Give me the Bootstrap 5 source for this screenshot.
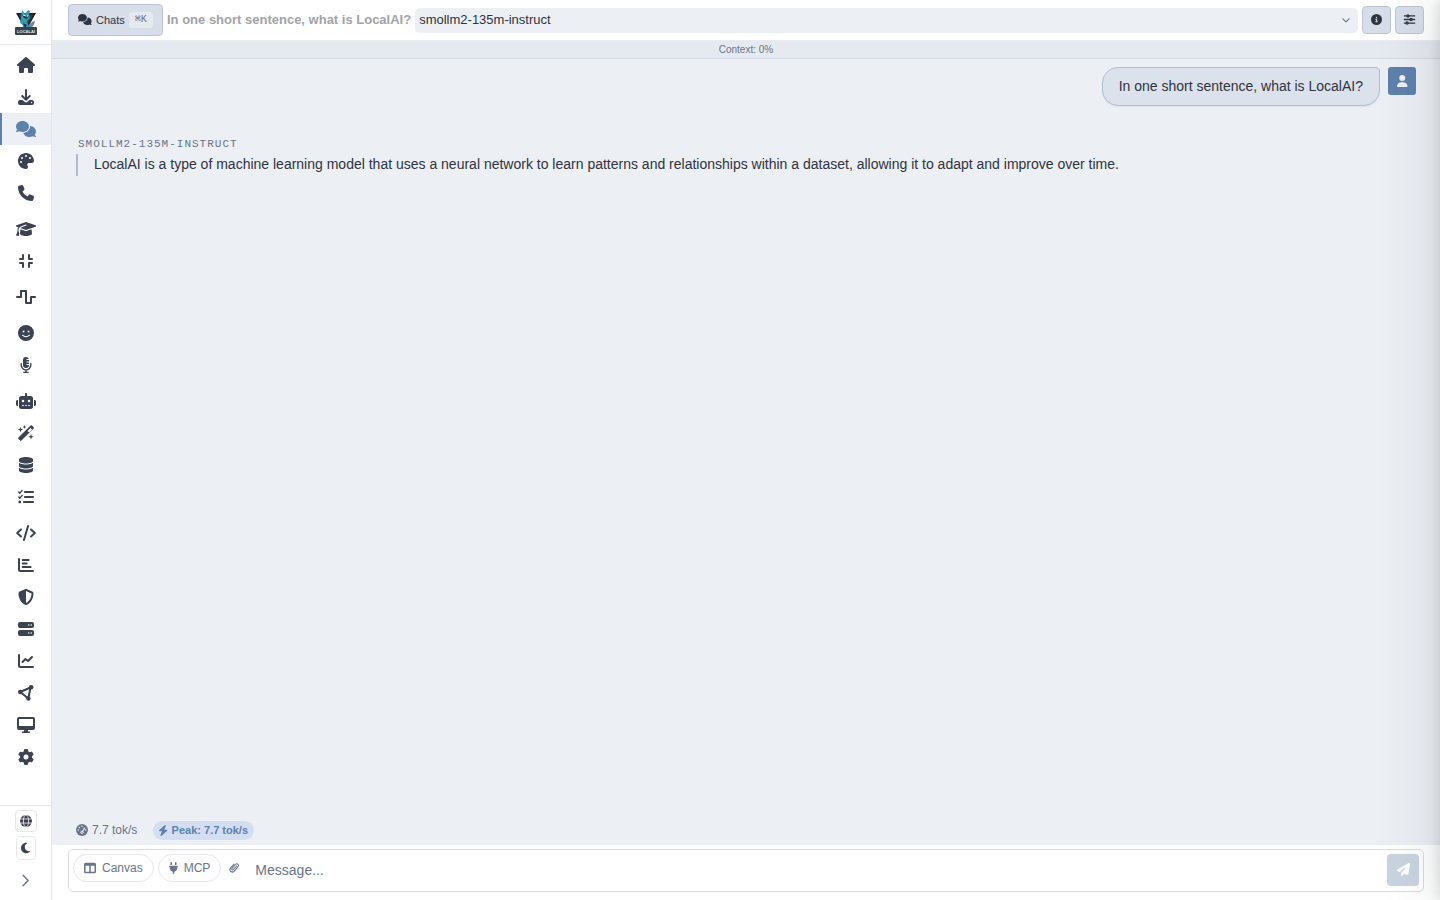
<!DOCTYPE html>
<html lang="en">
<head>
<meta charset="utf-8">
<meta name="viewport" content="width=device-width, initial-scale=1">
<title>LocalAI</title>
<link href="https://cdn.jsdelivr.net/npm/bootstrap@5.3.0/dist/css/bootstrap.min.css" rel="stylesheet">
<style>
:root{--ink:#2e3440;--nav:#3b4252;--muted:#69758a;--accent:#5e81ac;--bg:#eceff4;--line:#e5e7eb;--control:#d8dee9}
body{font-family:"Liberation Sans",Arial,sans-serif;font-size:14px;line-height:22px;color:var(--ink);background:var(--bg)}
.ico{height:1em;width:auto;display:block;flex:none;fill:currentColor;overflow:visible}
.ico .st{fill:none;stroke:currentColor;stroke-width:64;stroke-linecap:round;stroke-linejoin:round}
.side{width:52px;background:#fff;border-right:1px solid #e2e5ec;flex:none}
.brand{height:45px;border-bottom:1px solid var(--line)}
.side-link{height:32px;color:var(--nav);font-size:16px;border-left:2px solid transparent;padding-right:2px}
.side-link.active{background:var(--bg);border-color:var(--accent);color:var(--accent)}
.side-foot{height:95px;border-top:1px solid var(--line);color:var(--nav)}
.mini{border:1px solid var(--line);border-radius:4px;background:#fff;font-size:12px;width:22px;height:22px;padding:0;color:var(--nav)}
.mini.tall{width:20px;height:24px}
.topbar{height:41px;background:#fff;border-bottom:1px solid #e8ebf0}
.ctl{background:var(--control);border:1px solid #bcc5d5;border-radius:4px;color:var(--ink);font-size:11px;line-height:16px;padding:0}
.ctl:hover{background:#ccd4e1}
.chats{height:32px;width:95px}
.chats .ico{margin-bottom:2px}
.square{width:29px;height:28px;padding-bottom:2px}
.keys{font:10px/14px "Liberation Mono","DejaVu Sans Mono",monospace;color:var(--muted);background:#e5e9f0;border:1px solid #e5e9f0;border-radius:3px;padding:0 4px;width:24px;height:16px}
.chat-title{font-size:13px;line-height:20px;font-weight:600;color:#a0a3a9}
.model{height:25px;background-color:var(--bg);border:0;border-radius:5px;font-size:13px;line-height:20px;color:var(--ink);padding:0 24px 0 4px;appearance:none;width:100%}
.chev{right:8px;top:8px;font-size:9px;color:var(--muted);pointer-events:none}
.context{height:18px;background:#e5e9f0;border-bottom:1px solid #d4dae5;font-size:10px;line-height:17px;color:var(--muted)}
.log{padding:8px 24px}
.bubble{background:#dbe2eb;border:1px solid #afc0d6;border-radius:16px 4px 16px 16px;padding:8px 16px;line-height:21px;box-shadow:0 1px 2px #0000000d}
.avatar{width:28px;height:28px;border-radius:3px;background:var(--accent);color:var(--bg);font-size:12px;padding-bottom:1px}
.who{font:11px/14px "Liberation Mono","DejaVu Sans Mono",monospace;letter-spacing:1px;color:var(--muted);margin-top:31px;padding-left:2px}
.reply{border-left:2px solid #b3bac8;padding:0 0 2px 16px;margin-top:3px;line-height:20px}
.stats{padding:0 24px 5px;font-size:12px;line-height:20px;color:var(--muted)}
.peak{background:#d3def3;color:var(--accent);border-radius:10px;font-size:11px;line-height:19px;font-weight:600;padding:0 6px}
.composer{background:#fff;padding:4px 16px 8px}
.box{border:1px solid #d9dbe0;border-radius:5px;padding:4px 4px 5px}
.chip{height:28px;border:1px solid var(--line);border-radius:14px;background:#fff;color:var(--muted);font-size:12px;line-height:18px;padding:0 10px;gap:6px}
.clip{border:0;background:none;color:var(--muted);font-size:12px;width:26px;height:28px;padding:0}
.expand{border:0;background:none;color:var(--muted);font-size:11px;width:26px;height:32px;padding:0}
.entry{border:0;background:transparent;color:var(--ink);height:32px;padding:0 8px;outline:0;min-width:0}
.entry::placeholder{color:var(--muted)}
.send{width:32px;height:32px;border:0;border-radius:4px;background:#cad4e1;color:#fff;font-size:13px;padding:0 0 2px}
.drawer{left:100%;top:0;width:380px;height:100%;box-shadow:0 0 14px #00000026,-8px 0 56px #3b42521f;background:#fff}
</style>
</head>
<body class="vh-100 overflow-hidden">
<svg class="d-none" xmlns="http://www.w3.org/2000/svg">
<symbol id="comments" viewBox="0 0 640 512"><path d="M208 352c114.900 0 208-78.800 208-176S322.900 0 208 0S0 78.800 0 176c0 38.600 14.700 74.300 39.600 103.400c-3.500 9.400-8.700 17.700-14.200 24.700c-4.800 6.200-9.700 11-13.300 14.300c-1.800 1.600-3.300 2.900-4.300 3.700c-.5 .4-.9 .7-1.100 .8l-.2 .2C1 327.200-1.400 334.400 .8 340.900S9.100 352 16 352c21.800 0 43.800-5.600 62.100-12.500c9.200-3.500 17.800-7.400 25.200-11.400C134.100 343.300 169.800 352 208 352zM448 176c0 112.300-99.100 196.900-216.500 207C255.800 457.400 336.400 512 432 512c38.200 0 73.900-8.700 104.700-23.900c7.500 4 16 7.900 25.200 11.400c18.300 6.900 40.300 12.500 62.100 12.500c6.900 0 13.100-4.500 15.200-11.100c2.100-6.600-.2-13.800-5.800-17.900l-.2-.2c-.2-.2-.6-.4-1.100-.8c-1-.8-2.500-2-4.300-3.700c-3.600-3.300-8.500-8.100-13.300-14.300c-5.500-7-10.700-15.400-14.200-24.700c24.900-29 39.600-64.700 39.600-103.400c0-92.800-84.900-168.900-192.600-175.500c.4 5.100 .6 10.300 .6 15.500z"/></symbol>
</svg>
<div class="d-flex h-100">
<aside class="side d-flex flex-column">
  <a href="#" class="brand d-flex align-items-center justify-content-center" aria-label="LocalAI home">
    <svg width="24" height="28" viewBox="0 0 24 28"><path d="M2 5h20L12 23z" fill="#17242d"/><path d="M5 7h14l-7 12z" fill="#294650"/><path d="M7 10 8 2l3 4 3-4 2 1-1 4 1 3-3 3 1 4 5 2-3 4H8l1-6-3-2z" fill="#3a98ac"/><path d="M8 7l7 1-2 3-3-1zM9 15l4 2-2 4z" fill="#17404f"/><path d="M15 16c3 0 2-3 6-3-1 5-3 7-6 6z" fill="#747fb0"/><path d="m9 7 3 1M14 7l-1 2" stroke="#bff2ee"/><rect x="1" y="19" width="22" height="8" rx="1" fill="#36434a"/><text x="12" y="25" text-anchor="middle" font-family="Liberation Sans, sans-serif" font-size="4" font-weight="700" fill="#e3e8e9">LOCALAI</text></svg>
  </a>
  <nav class="d-flex flex-column flex-grow-1 pt-1" aria-label="Main">
    <div class="mb-1">
    <a href="#" class="side-link d-flex align-items-center justify-content-center" aria-label="Home"><svg class="ico" viewBox="0 0 576 512"><path d="M575.800 255.500c0 18-15 32.100-32 32.100h-32l.7 160.200v24.200c0 22.100-17.900 40-40 40H392c-22.100 0-40-17.900-40-40V384c0-17.700-14.300-32-32-32H256c-17.700 0-32 14.300-32 32v88c0 22.100-17.900 40-40 40H104c-22.100 0-40-17.900-40-40V287.600H32c-18 0-32-14-32-32.100c0-9 3-17 10-24L266.400 8c7-7 15-8 22-8s15 2 21 7L564.800 231.500c8 7 12 15 11 24z"/></svg></a>
    <a href="#" class="side-link d-flex align-items-center justify-content-center" aria-label="Install models"><svg class="ico" viewBox="0 0 512 512"><path class="st" d="M256 28v300M136 224l120 118 120-118"/><path d="M64 352h80l67 58q45 36 90 0l67-58h80q64 0 64 64v32q0 64-64 64H64q-64 0-64-64v-32q0-64 64-64zm368 104a24 24 0 1 0 0-48 24 24 0 0 0 0 48z" fill-rule="evenodd"/></svg></a>
    <a href="#" class="side-link active d-flex align-items-center justify-content-center" aria-label="Chat" aria-current="page"><svg class="ico" viewBox="0 0 640 512"><use href="#comments"/></svg></a>
    <a href="#" class="side-link d-flex align-items-center justify-content-center" aria-label="Studio"><svg class="ico" viewBox="0 0 512 512"><path d="M512 256c0 .9 0 1.800 0 2.700c-.4 36.500-33.600 61.300-70.100 61.300H344c-26.500 0-48 21.500-48 48c0 3.400 .4 6.700 1 9.900c2.100 10.200 6.500 20 10.800 29.900c6.100 13.800 12.100 27.500 12.100 42c0 31.800-21.600 60.700-53.400 62c-3.500 .1-7 .2-10.600 .2C114.600 512 0 397.400 0 256S114.600 0 256 0S512 114.600 512 256zM128 288a32 32 0 1 0 -64 0 32 32 0 1 0 64 0zm0-96a32 32 0 1 0 0-64 32 32 0 1 0 0 64zM288 96a32 32 0 1 0 -64 0 32 32 0 1 0 64 0zm96 96a32 32 0 1 0 0-64 32 32 0 1 0 0 64z"/></svg></a>
    <a href="#" class="side-link d-flex align-items-center justify-content-center" aria-label="Talk"><svg class="ico" viewBox="0 0 512 512"><path d="M164.900 24.600c-7.700-18.600-28-28.500-47.400-23.200l-88 24C12.100 30.200 0 46 0 64C0 311.400 200.600 512 448 512c18 0 33.800-12.100 38.600-29.500l24-88c5.300-19.400-4.600-39.700-23.200-47.400l-96-40c-16.300-6.800-35.200-2.100-46.300 11.600L304.700 368C234.300 334.700 177.300 277.700 144 207.300L193.300 167c13.700-11.200 18.400-30 11.600-46.300l-40-96z"/></svg></a>
    </div><div class="mb-1">
    <a href="#" class="side-link d-flex align-items-center justify-content-center" aria-label="Fine-tune"><svg class="ico" viewBox="0 0 640 512"><path d="M320 32c-8.100 0-16.100 1.400-23.700 4.100L15.800 137.400C6.300 140.900 0 149.900 0 160s6.300 19.100 15.800 22.600l57.900 20.900C57.300 229.300 48 259.800 48 291.900v28.100c0 28.400-10.800 57.700-22.300 80.800c-6.500 13-13.900 25.800-22.500 37.600C0 442.700-.9 448.300 .9 453.400s6 8.900 11.200 10.200l64 16c4.200 1.100 8.700 .3 12.400-2s6.300-6.100 7.100-10.400c8.600-42.800 4.300-81.200-2.100-108.700C90.300 344.300 86 329.800 80 316.500V291.900c0-30.200 10.200-58.700 27.900-81.500c12.900-15.500 29.600-28 49.200-35.700l157-61.700c8.200-3.200 17.500 .8 20.700 9s-.8 17.500-9 20.700l-157 61.700c-12.400 4.900-23.300 12.400-32.200 21.600l159.600 57.600c7.600 2.700 15.600 4.100 23.700 4.100s16.100-1.400 23.700-4.100L624.200 182.600c9.500-3.400 15.800-12.500 15.800-22.600s-6.300-19.100-15.800-22.600L343.700 36.100C336.100 33.400 328.100 32 320 32zM128 408c0 35.300 86 72 192 72s192-36.700 192-72L496.700 262.600 354.500 314c-11.100 4-22.800 6-34.500 6s-23.500-2-34.500-6L143.300 262.600 128 408z"/></svg></a>
    <a href="#" class="side-link d-flex align-items-center justify-content-center" aria-label="Quantize"><svg class="ico" viewBox="0 0 448 512"><path class="st" d="M32 192h96V64M320 64v128h96M32 320h96v128M320 448V320h96"/></svg></a>
    </div><div class="mb-1">
    <a href="#" class="side-link d-flex align-items-center justify-content-center" aria-label="Sound"><svg class="ico" viewBox="0 0 640 512"><path class="st" d="M32 256h128V64h160v384h160V256h128"/></svg></a>
    </div><div class="mb-1">
    <a href="#" class="side-link d-flex align-items-center justify-content-center" aria-label="Faces"><svg class="ico" viewBox="0 0 512 512"><path fill-rule="evenodd" d="M256 0a256 256 0 1 0 0 512 256 256 0 0 0 0-512zM176 176a32 32 0 1 1 0 64 32 32 0 0 1 0-64zm160 0a32 32 0 1 1 0 64 32 32 0 0 1 0-64zM150 311q106 93 212 0c22-9 35 8 22 26q-128 111-256 0c-13-18 0-35 22-26z"/></svg></a>
    <a href="#" class="side-link d-flex align-items-center justify-content-center" aria-label="Voices"><svg class="ico" viewBox="0 0 384 512"><path d="M192 0a96 96 0 0 0-96 96v160a96 96 0 0 0 192 0h-80v-32h80v-48h-80v-32h80V96h-80V64h74C267 26 235 0 192 0z"/><path class="st" style="stroke-width:44" d="M38 216v40a154 154 0 0 0 308 0v-40M192 410v80M120 490h144"/></svg></a>
    </div><div class="mb-1">
    <a href="#" class="side-link d-flex align-items-center justify-content-center" aria-label="Agents"><svg class="ico" viewBox="0 0 640 512"><path d="M320 0c17.700 0 32 14.300 32 32V96H472c39.800 0 72 32.200 72 72V440c0 39.800-32.200 72-72 72H168c-39.800 0-72-32.200-72-72V168c0-39.800 32.200-72 72-72H288V32c0-17.700 14.300-32 32-32zM208 384c-8.800 0-16 7.200-16 16s7.200 16 16 16h32c8.800 0 16-7.200 16-16s-7.200-16-16-16H208zm96 0c-8.800 0-16 7.200-16 16s7.200 16 16 16h32c8.800 0 16-7.200 16-16s-7.200-16-16-16H304zm96 0c-8.800 0-16 7.200-16 16s7.200 16 16 16h32c8.800 0 16-7.200 16-16s-7.200-16-16-16H400zM264 256a40 40 0 1 0 -80 0 40 40 0 1 0 80 0zm152 40a40 40 0 1 0 0-80 40 40 0 1 0 0 80zM48 224H64V416H48c-26.500 0-48-21.500-48-48V272c0-26.500 21.500-48 48-48zm544 0c26.500 0 48 21.500 48 48v96c0 26.500-21.500 48-48 48H576V224h16z"/></svg></a>
    <a href="#" class="side-link d-flex align-items-center justify-content-center" aria-label="Skills"><svg class="ico" viewBox="0 0 512 512"><path fill-rule="evenodd" d="M14 402 402 14q22-20 44 0l52 52q20 22 0 44L110 498q-22 20-44 0l-52-52q-20-22 0-44zm340-160 95-95-48-48-95 95z"/><path d="M208 0l18 46 46 18-46 18-18 46-18-46-46-18 46-18zM80 60l24 60 60 24-60 24-24 60-24-60-60-24 60-24zM416 284l24 64 64 24-64 24-24 64-24-64-64-24 64-24z"/></svg></a>
    <a href="#" class="side-link d-flex align-items-center justify-content-center" aria-label="Memory"><svg class="ico" viewBox="0 0 448 512"><path d="M448 80v48c0 44.200-100.300 80-224 80S0 172.200 0 128V80C0 35.800 100.300 0 224 0S448 35.800 448 80zM393.200 214.700c20.800-7.400 39.900-16.900 54.800-28.600V288c0 44.200-100.300 80-224 80S0 332.200 0 288V186.100c14.900 11.800 34 21.200 54.800 28.600C99.700 230.700 159.500 240 224 240s124.300-9.300 169.200-25.300zM0 346.100c14.900 11.800 34 21.200 54.800 28.600C99.700 390.700 159.500 400 224 400s124.300-9.300 169.200-25.300c20.800-7.400 39.900-16.900 54.800-28.600V432c0 44.200-100.300 80-224 80S0 476.200 0 432V346.100z"/></svg></a>
    <a href="#" class="side-link d-flex align-items-center justify-content-center" aria-label="Tasks"><svg class="ico" viewBox="0 0 512 512"><path class="st" d="M220 96h262M220 256h262M190 416h292"/><path class="st" style="stroke-width:46" d="m24 96 36 36 68-80M24 256l36 36 68-80"/><circle cx="56" cy="416" r="46"/></svg></a>
    </div><div>
    <a href="#" class="side-link d-flex align-items-center justify-content-center" aria-label="Code"><svg class="ico" viewBox="0 0 640 512"><path class="st" d="M160 144 38 256l122 112M480 144l122 112-122 112M386 32 254 480"/></svg></a>
    <a href="#" class="side-link d-flex align-items-center justify-content-center" aria-label="Usage"><svg class="ico" viewBox="0 0 512 512"><path class="st" d="M32 64v336q0 48 48 48h400M150 96h190M150 208h126M150 320h254"/></svg></a>
    <a href="#" class="side-link d-flex align-items-center justify-content-center" aria-label="Security"><svg class="ico" viewBox="0 0 512 512"><path d="M256 0c4.600 0 9.200 1 13.400 2.900L457.700 82.800c22 9.300 38.400 31 38.300 57.200c-.5 99.200-41.300 280.700-213.600 363.200c-16.700 8-36.100 8-52.800 0C57.300 420.700 16.500 239.200 16 140c-.1-26.200 16.300-47.900 38.300-57.200L242.700 2.900C246.800 1 251.400 0 256 0zm0 66.800V444.800C394 378 431.100 230.100 432 141.400L256 66.800z" fill-rule="evenodd"/></svg></a>
    <a href="#" class="side-link d-flex align-items-center justify-content-center" aria-label="Backends"><svg class="ico" viewBox="0 0 512 512"><path fill-rule="evenodd" d="M64 32h384q64 0 64 64v64q0 64-64 64H64q-64 0-64-64V96q0-64 64-64zm280 72a24 24 0 1 0 0 48 24 24 0 0 0 0-48zm80 0a24 24 0 1 0 0 48 24 24 0 0 0 0-48zM64 288h384q64 0 64 64v64q0 64-64 64H64q-64 0-64-64v-64q0-64 64-64zm280 72a24 24 0 1 0 0 48 24 24 0 0 0 0-48zm80 0a24 24 0 1 0 0 48 24 24 0 0 0 0-48z"/></svg></a>
    <a href="#" class="side-link d-flex align-items-center justify-content-center" aria-label="Traces"><svg class="ico" viewBox="0 0 512 512"><path class="st" d="M32 64v336q0 48 48 48h400M144 288l96-96 80 64 128-128"/></svg></a>
    <a href="#" class="side-link d-flex align-items-center justify-content-center" aria-label="Swarm"><svg class="ico" viewBox="0 0 512 512"><path class="st" d="M72 224 400 80 332 432z"/><circle cx="72" cy="224" r="72"/><circle cx="420" cy="72" r="72"/><circle cx="332" cy="432" r="72"/></svg></a>
    <a href="#" class="side-link d-flex align-items-center justify-content-center" aria-label="System"><svg class="ico" viewBox="0 0 576 512"><path fill-rule="evenodd" d="M64 0h448q64 0 64 64v288q0 64-64 64H346l10 50h44q23 0 23 23t-23 23H176q-23 0-23-23t23-23h44l10-50H64q-64 0-64-64V64Q0 0 64 0zm0 64v224h448V64z"/></svg></a>
    <a href="#" class="side-link d-flex align-items-center justify-content-center" aria-label="Settings"><svg class="ico" viewBox="0 0 512 512"><path d="M495.900 166.600c3.200 8.700 .5 18.400-6.400 24.600l-43.300 39.400c1.100 8.300 1.700 16.800 1.700 25.400s-.6 17.100-1.700 25.400l43.300 39.400c6.900 6.200 9.600 15.900 6.400 24.600c-4.400 11.900-9.700 23.300-15.800 34.300l-4.700 8.100c-6.600 11-14 21.400-22.100 31.200c-5.900 7.200-15.700 9.600-24.500 6.800l-55.700-17.700c-13.400 10.300-28.200 18.900-44 25.400l-12.500 57.100c-2 9.100-9 16.300-18.200 17.800c-13.800 2.300-28 3.500-42.500 3.500s-28.700-1.200-42.500-3.500c-9.200-1.500-16.200-8.700-18.200-17.800l-12.500-57.100c-15.800-6.500-30.600-15.100-44-25.400L83.100 425.900c-8.800 2.800-18.600 .3-24.500-6.800c-8.100-9.800-15.500-20.200-22.100-31.200l-4.700-8.100c-6.100-11-11.400-22.400-15.800-34.300c-3.200-8.700-.5-18.400 6.400-24.600l43.300-39.400C64.600 273.100 64 264.600 64 256s.6-17.100 1.700-25.400L22.400 191.200c-6.900-6.200-9.600-15.900-6.400-24.600c4.400-11.900 9.700-23.300 15.800-34.300l4.700-8.100c6.600-11 14-21.400 22.100-31.200c5.900-7.200 15.700-9.600 24.500-6.800l55.700 17.700c13.400-10.300 28.200-18.900 44-25.400l12.500-57.100c2-9.100 9-16.300 18.200-17.800C227.300 1.200 241.500 0 256 0s28.700 1.200 42.500 3.500c9.200 1.500 16.200 8.700 18.200 17.800l12.500 57.100c15.800 6.500 30.600 15.100 44 25.400l55.700-17.700c8.800-2.800 18.600-.3 24.500 6.800c8.100 9.800 15.500 20.200 22.100 31.200l4.700 8.100c6.100 11 11.400 22.400 15.800 34.300zM256 336a80 80 0 1 0 0-160 80 80 0 1 0 0 160z"/></svg></a>
    </div>
  </nav>
  <div class="side-foot d-flex flex-column align-items-center gap-1 pt-1">
    <button type="button" class="mini d-flex align-items-center justify-content-center" aria-label="Language"><svg class="ico" viewBox="0 0 512 512"><circle cx="256" cy="256" r="256"/><path d="M0 168h512M0 344h512" stroke="#fff" stroke-width="32"/><ellipse cx="256" cy="256" rx="112" ry="262" fill="none" stroke="#fff" stroke-width="32"/></svg></button>
    <button type="button" class="mini tall d-flex align-items-center justify-content-center" aria-label="Dark theme"><svg class="ico" viewBox="0 0 384 512"><path d="M223.500 32C100 32 0 132.300 0 256S100 480 223.500 480c60.600 0 115.500-24.200 155.800-63.400c5-4.900 6.300-12.500 3.100-18.700s-10.100-9.700-17-8.500c-9.800 1.700-19.800 2.600-30.100 2.600c-96.900 0-175.500-78.800-175.500-176c0-65.800 36-123.100 89.300-153.300c6.100-3.500 9.200-10.500 7.700-17.300s-7.300-11.900-14.300-12.500c-6.300-.5-12.600-.8-19-.8z"/></svg></button>
    <button type="button" class="expand d-flex align-items-center justify-content-center" aria-label="Expand sidebar"><svg class="ico" viewBox="0 0 320 512"><path class="st" d="m48 16 240 240L48 496"/></svg></button>
  </div>
</aside>
<main class="d-flex flex-column flex-grow-1">
  <header class="topbar d-flex align-items-center gap-1 px-3">
    <button type="button" class="ctl chats d-flex align-items-center justify-content-center gap-1 flex-shrink-0"><svg class="ico" viewBox="0 0 640 512"><use href="#comments"/></svg><span>Chats</span><kbd class="keys">⌘K</kbd></button>
    <span class="chat-title text-nowrap">In one short sentence, what is LocalAI?</span>
    <div class="position-relative flex-grow-1">
      <select class="model d-block" aria-label="Model"><option>smollm2-135m-instruct</option></select>
      <svg class="ico chev position-absolute" viewBox="0 0 448 512"><path class="st" d="m48 160 176 176 176-176"/></svg>
    </div>
    <button type="button" class="ctl square d-flex align-items-center justify-content-center" aria-label="Model info"><svg class="ico" viewBox="0 0 512 512"><path d="M256 512A256 256 0 1 0 256 0a256 256 0 1 0 0 512zM216 336h24V272H216c-13.300 0-24-10.700-24-24s10.700-24 24-24h48c13.300 0 24 10.700 24 24v88h8c13.300 0 24 10.700 24 24s-10.700 24-24 24H216c-13.300 0-24-10.700-24-24s10.700-24 24-24zm40-208a32 32 0 1 1 0 64 32 32 0 1 1 0-64z" fill-rule="evenodd"/></svg></button>
    <button type="button" class="ctl square d-flex align-items-center justify-content-center" aria-label="Chat settings"><svg class="ico" viewBox="0 0 512 512"><path class="st" d="M20 90h100M245 90h250M20 256h245M390 256h105M20 422h60M205 422h290"/><g class="st"><circle cx="182" cy="90" r="48"/><circle cx="328" cy="256" r="48"/><circle cx="142" cy="422" r="48"/></g></svg></button>
  </header>
  <div class="context text-center">Context: 0%</div>
  <section class="log flex-grow-1 overflow-hidden" aria-label="Conversation">
    <div class="d-flex justify-content-end align-items-start gap-2">
      <div class="bubble">In one short sentence, what is LocalAI?</div>
      <div class="avatar d-flex align-items-center justify-content-center"><svg class="ico" viewBox="0 0 448 512"><path d="M224 256A128 128 0 1 0 224 0a128 128 0 1 0 0 256zm-45.700 48C79.800 304 0 383.800 0 482.300C0 498.700 13.300 512 29.700 512H418.300c16.400 0 29.700-13.300 29.700-29.700C448 383.800 368.200 304 269.700 304H178.300z"/></svg></div>
    </div>
    <div class="who text-uppercase">smollm2-135m-instruct</div>
    <div class="reply">LocalAI is a type of machine learning model that uses a neural network to learn patterns and relationships within a dataset, allowing it to adapt and improve over time.</div>
  </section>
  <div class="stats d-flex align-items-center gap-3">
    <span class="d-flex align-items-center gap-1"><svg class="ico" viewBox="0 0 512 512"><circle cx="256" cy="256" r="256"/><path d="M256 350 370 165" stroke="#eceff4" stroke-width="44" stroke-linecap="round"/><g fill="#eceff4"><circle cx="256" cy="96" r="32"/><circle cx="144" cy="144" r="32"/><circle cx="96" cy="256" r="32"/><circle cx="416" cy="256" r="32"/><circle cx="256" cy="352" r="64"/></g><circle cx="256" cy="352" r="26"/></svg>7.7 tok/s</span>
    <span class="peak d-flex align-items-center gap-1"><svg class="ico" viewBox="32 0 384 512"><path d="M349.400 44.600c5.900-13.700 1.500-29.700-10.600-38.500s-28.600-8-39.900 1.800l-256 224c-10 8.800-13.600 22.900-8.900 35.300S50.700 288 64 288H175.500L98.600 467.400c-5.900 13.700-1.500 29.700 10.600 38.500s28.600 8 39.900-1.800l256-224c10-8.800 13.600-22.900 8.900-35.300s-16.600-20.700-30-20.700H272.500L349.400 44.600z"/></svg>Peak: 7.7 tok/s</span>
  </div>
  <form class="composer">
    <div class="box d-flex align-items-start">
      <button type="button" class="chip d-flex align-items-center me-1"><svg class="ico" viewBox="0 0 512 512"><path fill-rule="evenodd" d="M64 32h384q64 0 64 64v320q0 64-64 64H64q-64 0-64-64V96q0-64 64-64zm0 128v256h160V160zm224 0v256h160V160z"/></svg>Canvas</button>
      <button type="button" class="chip d-flex align-items-center"><svg class="ico" viewBox="0 0 384 512"><path d="M96 0C78.300 0 64 14.300 64 32v96h64V32c0-17.700-14.300-32-32-32zM288 0c-17.700 0-32 14.300-32 32v96h64V32c0-17.700-14.300-32-32-32zM32 160c-17.700 0-32 14.300-32 32s14.300 32 32 32v32c0 77.400 55 142 128 156.800V480c0 17.700 14.300 32 32 32s32-14.300 32-32V412.800C297 398 352 333.400 352 256V224c17.700 0 32-14.300 32-32s-14.300-32-32-32H32z"/></svg>MCP</button>
      <button type="button" class="clip d-flex align-items-center justify-content-center" aria-label="Attach file"><svg class="ico" viewBox="0 0 448 512"><path fill="none" stroke="currentColor" stroke-width="46" stroke-linecap="round" d="M322 170 190 320C150 366 92 318 130 274L278 106C348 28 452 116 386 196L222 390C132 494 -20 372 62 264L214 88"/></svg></button>
      <input type="text" class="entry flex-grow-1" placeholder="Message..." aria-label="Message">
      <button type="submit" class="send d-flex align-items-center justify-content-center" aria-label="Send"><svg class="ico" viewBox="0 0 512 512"><path d="M498.100 5.600c10.100 7 15.400 19.100 13.500 31.200l-64 416c-1.500 9.700-7.400 18.200-16 23s-18.900 5.400-28 1.600L284 427.700l-68.500 74.100c-8.900 9.700-22.900 12.900-35.200 8.100S160 493.200 160 480V396.400c0-4 1.500-7.800 4.200-10.700L331.800 202.800c5.800-6.300 5.600-16-.4-22s-15.700-6.400-22-.7L106 360.800 17.700 316.600C7.100 311.300 .3 300.700 0 288.900s5.900-22.800 16.100-28.700l448-256c10.700-6.100 23.900-5.500 34 1.400z"/></svg></button>
    </div>
  </form>
</main>
</div>
<aside class="drawer position-fixed pe-none" aria-hidden="true"></aside>
<script src="https://cdn.jsdelivr.net/npm/bootstrap@5.3.0/dist/js/bootstrap.bundle.min.js"></script>
</body>
</html>
